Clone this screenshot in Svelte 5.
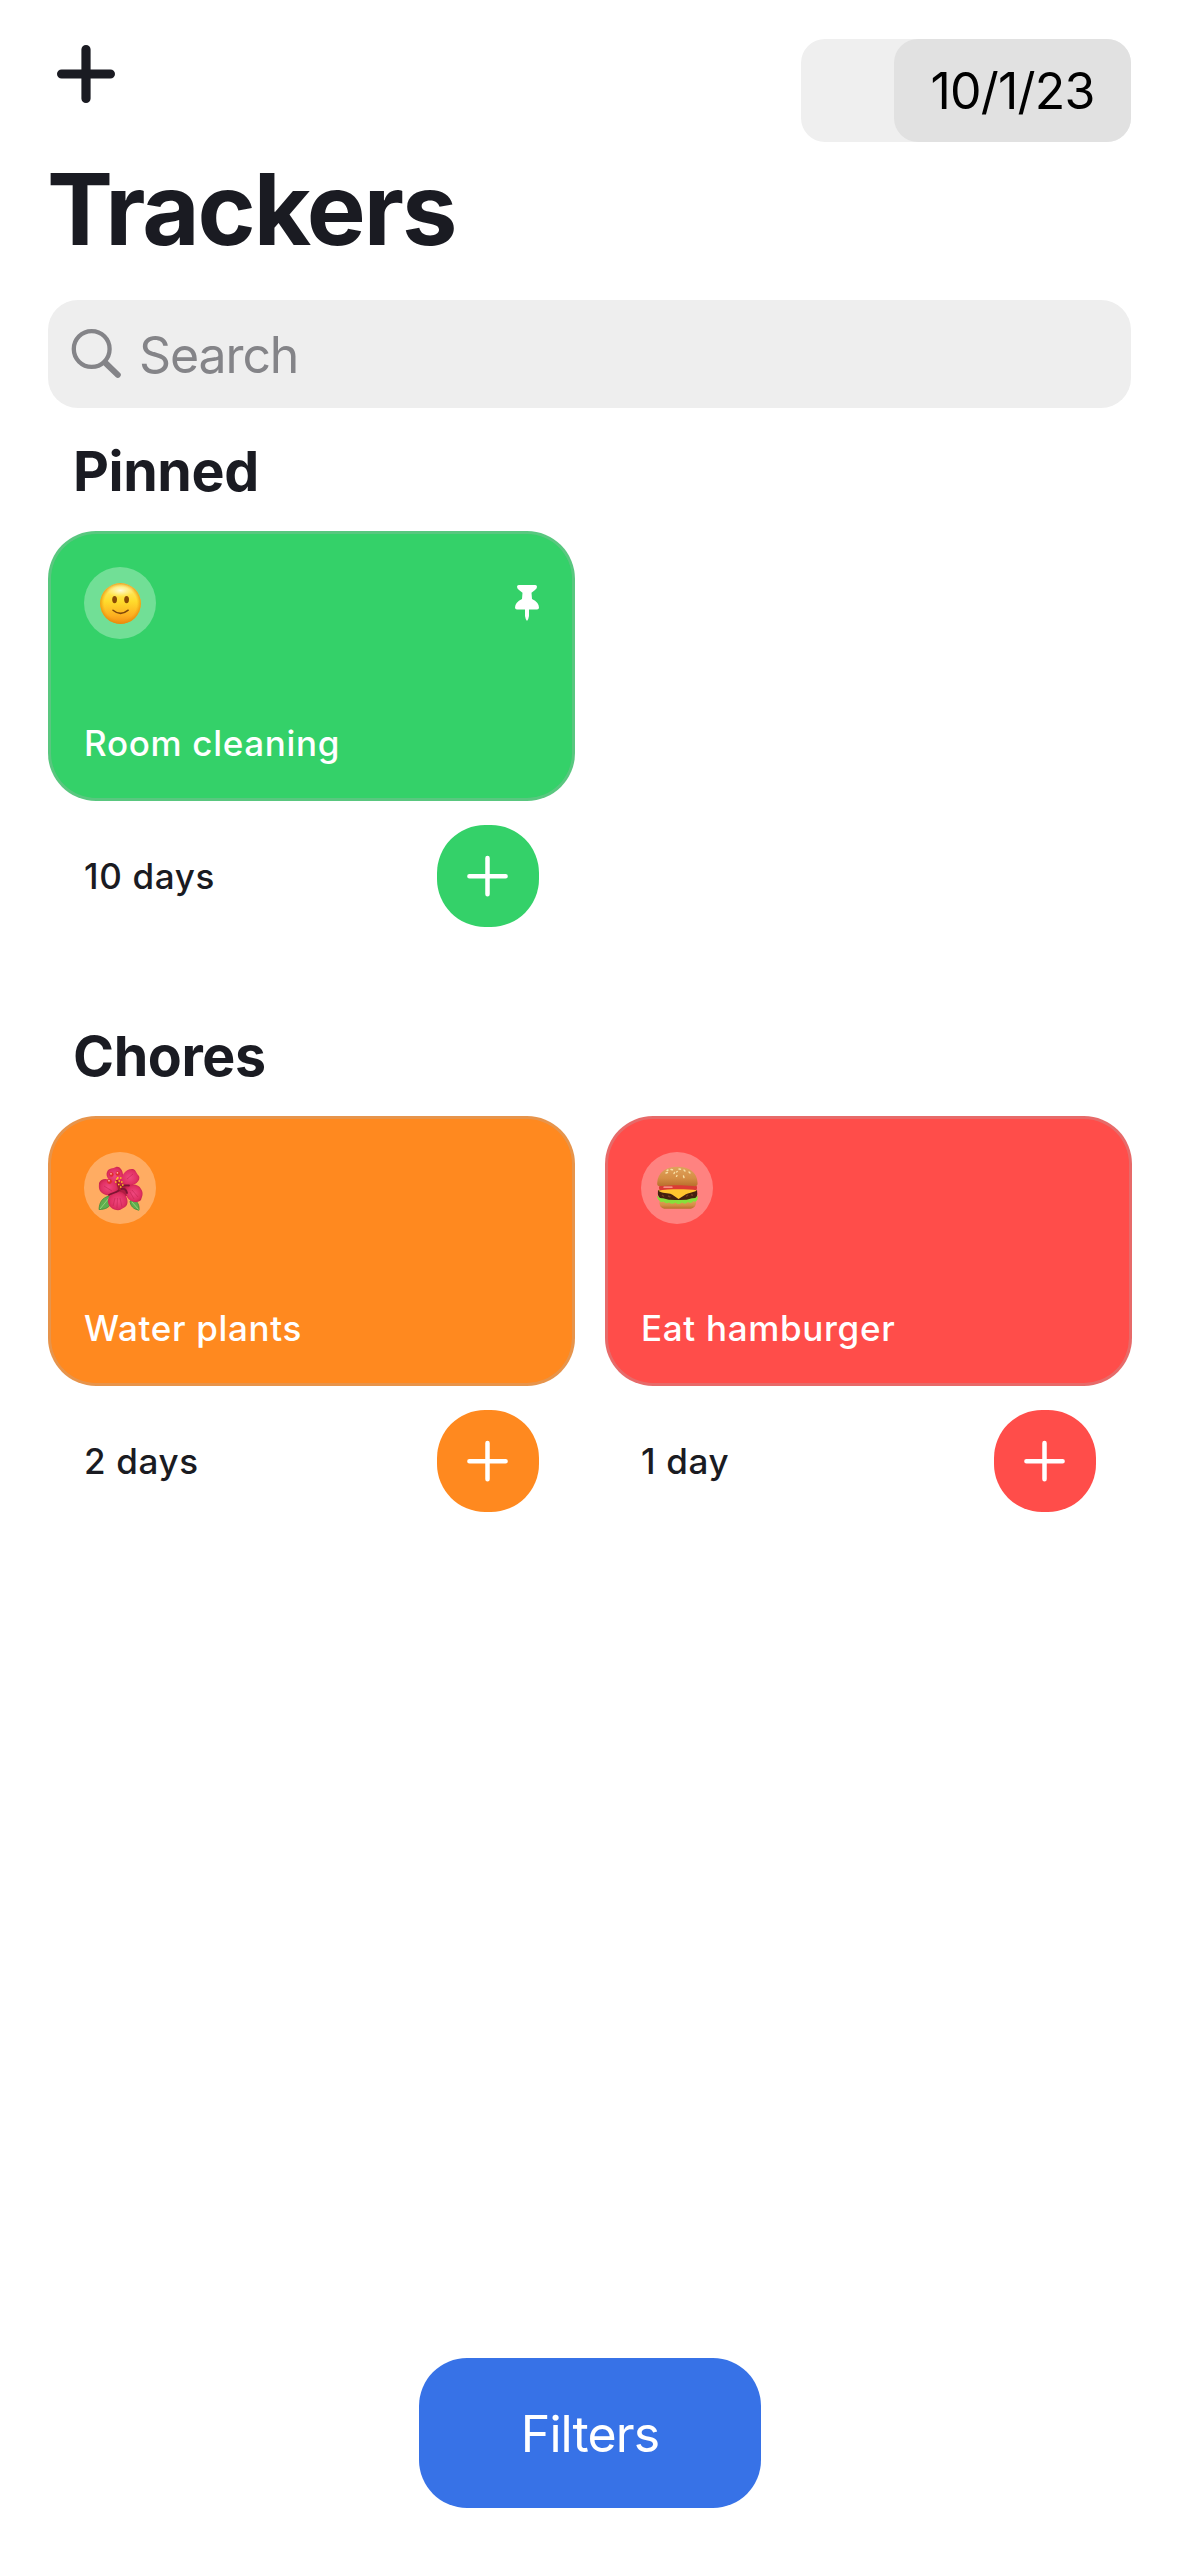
<script>
  const sections = [
    {
      title: 'Pinned',
      trackers: [
        { name: 'Room cleaning', days: '10 days', color: 'green', emoji: 'smile', pinned: true }
      ]
    },
    {
      title: 'Chores',
      trackers: [
        { name: 'Water plants', days: '2 days', color: 'orange', emoji: 'hibiscus', pinned: false },
        { name: 'Eat hamburger', days: '1 day', color: 'red', emoji: 'burger', pinned: false }
      ]
    }
  ];
</script>

{#snippet smile()}
  <svg viewBox="0 0 72 72" class="emoji" aria-label="smile">
    <defs>
      <linearGradient id="face" x1="0" y1="0" x2="0" y2="1">
        <stop offset="0" stop-color="#ffee7a" />
        <stop offset="0.45" stop-color="#ffdb2c" />
        <stop offset="0.8" stop-color="#fdae20" />
        <stop offset="1" stop-color="#f18c12" />
      </linearGradient>
      <radialGradient id="rim" cx="0.5" cy="0.5" r="0.5">
        <stop offset="0.8" stop-color="#f09a10" stop-opacity="0" />
        <stop offset="1" stop-color="#e58a08" stop-opacity="0.75" />
      </radialGradient>
      <radialGradient id="shine" cx="0.5" cy="0.5" r="0.5">
        <stop offset="0" stop-color="#fffbe0" stop-opacity="0.95" />
        <stop offset="1" stop-color="#fff6a0" stop-opacity="0" />
      </radialGradient>
    </defs>
    <circle cx="36.5" cy="36.5" r="20.4" fill="url(#face)" />
    <circle cx="36.5" cy="36.5" r="20.4" fill="url(#rim)" />
    <ellipse cx="36.5" cy="23.5" rx="14" ry="6.5" fill="url(#shine)" />
    <ellipse cx="30.6" cy="32.6" rx="2.4" ry="3.6" fill="#8a4a05" />
    <ellipse cx="42.6" cy="32.6" rx="2.4" ry="3.6" fill="#8a4a05" />
    <path d="M29 43.200Q36.500 49.600 44.200 43.200" fill="none" stroke="#80470a" stroke-width="1.5" stroke-linecap="round" />
  </svg>
{/snippet}

{#snippet hibiscus()}
  <svg viewBox="0 0 72 72" class="emoji" aria-label="hibiscus">
    <defs>
      <radialGradient id="petal" cx="0.5" cy="0.5" r="0.6">
        <stop offset="0" stop-color="#f0487f" />
        <stop offset="0.65" stop-color="#e03063" />
        <stop offset="1" stop-color="#c01d45" />
      </radialGradient>
    </defs>
    <path d="M25 44C18 46 15.500 50 15 57.500C22 57.500 26 55 27.500 50Z" fill="#5fae4e" stroke="#3f8a38" stroke-width="0.8" />
    <path d="M46 49C46.500 54 49 57 55 58.200C55.500 54 54 50 50 47Z" fill="#5fae4e" stroke="#3f8a38" stroke-width="0.8" />
    <path d="M16 57L25 46M54.500 57.500L48 50" stroke="#9bd67c" stroke-width="0.9" />
    <circle cx="37" cy="36.500" r="9.500" fill="#b01c42" />
    <path d="M33 33C26 30 21 25 23 20C25 15.500 29 17 32 15C36 14 40 19 39 27Z" fill="url(#petal)" />
    <path d="M36 32C37 22 43 16 49 17C52 18 52 21 55 24C57 29 51 34 42 34Z" fill="url(#petal)" />
    <path d="M34 38C30 44 23 45 18 41C14 38 15 34 15 31C17 26 23 26 28 29C32 31 34 34 34 38Z" fill="url(#petal)" />
    <path d="M41 35C47 31 55 32 57 37C60 41 58 45 57 48C53 52 46 50 43 45Z" fill="url(#petal)" />
    <path d="M34 40C39 39 43 44 43.500 49C44 55 39 56 36 58C30 59 24 55 24 49C24 43 29 41 34 40Z" fill="url(#petal)" />
    <path d="M35 38C38 36 42 36 43 41M34 39C31 41 28 41 25 43M38 34C40 33 42 33.500 45 33.500" stroke="#7d1432" stroke-width="1.800" fill="none" stroke-linecap="round" />
    <path d="M33 56L33.500 46M38 55L36 46M29 54L31 46M48 38L54 45M46 40L50 47M20 34L28 39M43 27L49 22" stroke="#c32550" stroke-width="0.800" opacity="0.700" />
    <path d="M36 38L33 28" stroke="#a81e30" stroke-width="2.600" />
    <path d="M32 27h1.500M36 26h1.500M34.500 29h1.500M31 30h1.500M37 30h1.500M34 32.500h1.500M38 33h1.500M36 35h1.500M33 25.800h1.500" stroke="#ffc91f" stroke-width="1.700" />
    <circle cx="27.400" cy="22.500" r="2.200" fill="#e02c2c" />
    <circle cx="33.800" cy="21.500" r="2.200" fill="#e02c2c" />
    <circle cx="25.500" cy="29.500" r="2.400" fill="#e02c2c" />
    <circle cx="27" cy="21.800" r="0.900" fill="#ffb0a8" />
    <circle cx="33.400" cy="20.800" r="0.900" fill="#ffb0a8" />
    <circle cx="25" cy="28.700" r="0.900" fill="#ffb0a8" />
  </svg>
{/snippet}

{#snippet burger()}
  <svg viewBox="0 0 72 72" class="emoji" aria-label="hamburger">
    <defs>
      <linearGradient id="bun" x1="0" y1="0" x2="0" y2="1">
        <stop offset="0" stop-color="#dfa35c" />
        <stop offset="0.6" stop-color="#d48d44" />
        <stop offset="1" stop-color="#b96f2c" />
      </linearGradient>
    </defs>
    <path d="M18.500 48H55C55.500 54 53 56.800 48 56.800H25C20 56.800 18 54 18.500 48Z" fill="url(#bun)" />
    <path d="M17 38H56Q57.500 47 52 47.500Q37 50 21 47.500Q16 46 17 38Z" fill="#43200f" />
    <path d="M21 43l2 1.500M27 44l2.500 1M45 44.500l2-1.500M50 42.500l2 1" stroke="#713d20" stroke-width="1.400" />
    <path d="M16 43.500Q18 46.500 22 46.200Q29 48.500 36.500 48Q45 48.500 51 46.200Q55 46.500 56.800 43.500L56.500 47.500Q54.500 51 52.500 49Q50 52.500 47 50Q44 53 41 50.500Q37.500 53.500 34.500 50.500Q31 53 28 50.500Q25 52.500 22.500 49.500Q19.500 51 18.500 48.500Q16.500 48 16 43.500Z" fill="#86e03a" />
    <rect x="18" y="33" width="38" height="5.600" rx="2.500" fill="#db3b34" />
    <path d="M23 35.200H31" stroke="#ffaaa0" stroke-width="1.300" stroke-linecap="round" />
    <path d="M17 38.500C28 36.800 45 36.800 56 38.200C52 41 47 40.500 43 43.500L37.500 47Q34 44.500 31 42.500C27 40.200 21 42 17 38.500Z" fill="#ffc62e" />
    <path d="M16.200 31C17 20 25 14.800 36.500 14.800C48 14.800 56 20 56.600 31C56.700 34 55 34.400 52 34C42 33 30 33 20.500 34C17.500 34.400 16 34 16.200 31Z" fill="url(#bun)" />
    <path d="M25 21l1.500-.5M30 17.500l1.500.3M33 21.500l.5-1M38 17l1.500.2M43 18l1 1M35.500 20l.8-.5M48 20l1 1M26 18.500l1-.5M42.500 24l.5 1.500M36 23.500l-.5.8" stroke="#f8dfa4" stroke-width="1.400" stroke-linecap="round" />
  </svg>
{/snippet}

<main class="screen">
  <header class="topbar">
    <button class="add" aria-label="Add tracker">
      <svg viewBox="0 0 60 60" class="add-icon">
        <path d="M30 5.600V54.400M5.600 30H54.400" />
      </svg>
    </button>
    <div class="date-field">
      <div class="date">10/1/23</div>
    </div>
  </header>

  <h1>Trackers</h1>

  <div class="search">
    <svg viewBox="0 0 52 52" class="search-icon">
      <circle cx="21.700" cy="21" r="17.900" />
      <path d="M35 34.500L47.800 46.800" />
    </svg>
    <span>Search</span>
  </div>

  {#each sections as section}
    <section>
      <h2>{section.title}</h2>
      <div class="grid">
        {#each section.trackers as t}
          <article class={t.color}>
            <div class="card">
              <div class="card-top">
                <div class="bubble">
                  {#if t.emoji === 'smile'}
                    {@render smile()}
                  {:else if t.emoji === 'hibiscus'}
                    {@render hibiscus()}
                  {:else}
                    {@render burger()}
                  {/if}
                </div>
                {#if t.pinned}
                  <svg viewBox="0 0 24 36" class="pin">
                    <path d="M3.800 0H20.200Q22 0 22 1.800Q22 3.500 20 5L16.500 7.800L17 14Q24 17.500 24 22.500Q24 24.600 22 24.600H14V31Q13.600 34 12 36Q10.400 34 10 31V24.600H2Q0 24.600 0 22.500Q0 17.500 7 14L7.500 7.800L4 5Q2 3.500 2 1.800Q2 0 3.800 0Z" />
                  </svg>
                {/if}
              </div>
              <p class="name">{t.name}</p>
            </div>
            <div class="footer">
              <span class="days">{t.days}</span>
              <button class="done" aria-label="Mark done">
                <svg viewBox="0 0 102 102">
                  <path d="M50.500 33.100V69.300M32.400 51.200H68.600" />
                </svg>
              </button>
            </div>
          </article>
        {/each}
      </div>
    </section>
  {/each}

  <button class="filters">Filters</button>
</main>

<style>
  :global(body) {
    background: #fff;
  }

  .screen {
    box-sizing: border-box;
    width: 1179px;
    height: 2556px;
    padding: 39px 47px 48px 48px;
    display: flex;
    flex-direction: column;
    overflow: hidden;
    background: #fff;
    color: #1a1b22;
    font-family: Inter, 'Liberation Sans', sans-serif;
  }

  button {
    margin: 0;
    padding: 0;
    border: 0;
    background: none;
    font: inherit;
  }

  svg {
    display: block;
  }

  .topbar {
    display: flex;
    justify-content: space-between;
    height: 103px;
    padding-right: 1px;
  }

  .add {
    width: 60px;
    height: 60px;
    margin: 5px 0 0 8px;
  }

  .add-icon {
    fill: none;
    stroke: #1a1b22;
    stroke-width: 9.2;
    stroke-linecap: round;
  }

  .date-field {
    display: flex;
    justify-content: flex-end;
    width: 330px;
    height: 103px;
    border-radius: 24px;
    background: #efefef;
  }

  .date {
    width: 237px;
    border-radius: 24px;
    background: #e1e1e1;
    color: #000;
    font-size: 50px;
    line-height: 104px;
    letter-spacing: -0.8px;
    text-align: center;
  }

  h1 {
    margin: 7px 0 0 -1px;
    height: 120px;
    font-size: 99px;
    line-height: 120px;
    font-weight: 700;
    letter-spacing: -2.1px;
  }

  .search {
    display: flex;
    align-items: center;
    flex: none;
    height: 108px;
    margin: 31px 1px 0 0;
    padding-left: 22px;
    box-sizing: border-box;
    border-radius: 30px;
    background: #eee;
    color: #848488;
    font-size: 50px;
    letter-spacing: -1.1px;
  }

  .search span {
    padding-top: 2px;
  }

  .search-icon {
    width: 52px;
    height: 52px;
    margin-right: 17px;
    fill: none;
    stroke: #848488;
    stroke-width: 4.3;
    stroke-linecap: round;
  }

  .search-icon path {
    stroke-width: 6;
  }

  section {
    height: 585px;
    flex: none;
  }

  h2 {
    margin: 0;
    padding: 28px 0 27px 25px;
    height: 68px;
    font-size: 55.5px;
    line-height: 70px;
    font-weight: 700;
    letter-spacing: -0.4px;
  }

  .grid {
    display: grid;
    grid-template-columns: 527px 527px;
    gap: 30px;
  }

  .green { --tint: #34d169; }
  .orange { --tint: #ff891f; }
  .red { --tint: #ff4d4a; }

  .card {
    box-sizing: border-box;
    height: 270px;
    padding: 33px 33px 34px;
    display: flex;
    flex-direction: column;
    justify-content: space-between;
    border: 3px solid rgba(174, 175, 180, 0.3);
    border-radius: 48px;
    background: var(--tint) border-box;
  }

  .card-top {
    display: flex;
    justify-content: space-between;
  }

  .bubble {
    width: 72px;
    height: 72px;
    border-radius: 50%;
    background: rgba(255, 255, 255, 0.3);
  }

  .pin {
    width: 24px;
    height: 36px;
    margin-top: 18px;
    fill: #fff;
  }

  .name {
    margin: 0;
    color: #fff;
    font-size: 35px;
    line-height: 42px;
    font-weight: 500;
    letter-spacing: 0.68px;
  }

  .footer {
    display: flex;
    align-items: center;
    justify-content: space-between;
    padding: 24px 36px 0;
  }

  .days {
    font-size: 35px;
    line-height: 42px;
    font-weight: 500;
    letter-spacing: 0.65px;
  }

  .done {
    width: 102px;
    height: 102px;
    border-radius: 48px;
    background: var(--tint);
  }

  .done svg {
    fill: none;
    stroke: #fff;
    stroke-width: 4.5;
    stroke-linecap: round;
  }

  .filters {
    align-self: center;
    flex: none;
    width: 342px;
    height: 150px;
    margin-top: auto;
    padding-top: 1px;
    border-radius: 48px;
    background: #3772e7;
    color: #fff;
    font-size: 50px;
    letter-spacing: -0.9px;
  }
</style>
